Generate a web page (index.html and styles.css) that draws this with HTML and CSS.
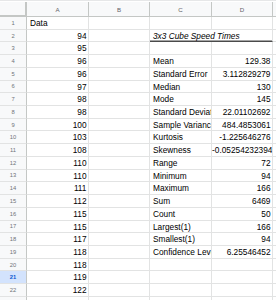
FILE: index.html
```html
<!DOCTYPE html>
<html>
<head>
<meta charset="utf-8">
<link rel="stylesheet" href="styles.css">
</head>
<body>
<div class="sheet">
  <div class="row head">
    <div class="corner"></div><div class="colh">A</div><div class="colh">B</div><div class="colh">C</div><div class="colh">D</div><div class="colh"></div>
  </div>
  <div class="row"><div class="rh">1</div><div class="c">Data</div><div class="c"></div><div class="c"></div><div class="c"></div><div class="c"></div></div>
  <div class="row"><div class="rh">2</div><div class="c n">94</div><div class="c"></div><div class="c title">3x3 Cube Speed Times</div><div class="c"></div></div>
  <div class="row"><div class="rh">3</div><div class="c n">95</div><div class="c"></div><div class="c"></div><div class="c"></div><div class="c"></div></div>
  <div class="row"><div class="rh">4</div><div class="c n">96</div><div class="c"></div><div class="c">Mean</div><div class="c n">129.38</div><div class="c"></div></div>
  <div class="row"><div class="rh">5</div><div class="c n">96</div><div class="c"></div><div class="c">Standard Error</div><div class="c n">3.112829279</div><div class="c"></div></div>
  <div class="row"><div class="rh">6</div><div class="c n">97</div><div class="c"></div><div class="c">Median</div><div class="c n">130</div><div class="c"></div></div>
  <div class="row"><div class="rh">7</div><div class="c n">98</div><div class="c"></div><div class="c">Mode</div><div class="c n">145</div><div class="c"></div></div>
  <div class="row"><div class="rh">8</div><div class="c n">98</div><div class="c"></div><div class="c">Standard Deviation</div><div class="c n">22.01102692</div><div class="c"></div></div>
  <div class="row"><div class="rh">9</div><div class="c n">100</div><div class="c"></div><div class="c">Sample Variance</div><div class="c n">484.4853061</div><div class="c"></div></div>
  <div class="row"><div class="rh">10</div><div class="c n">103</div><div class="c"></div><div class="c">Kurtosis</div><div class="c n">-1.225646276</div><div class="c"></div></div>
  <div class="row"><div class="rh">11</div><div class="c n">108</div><div class="c"></div><div class="c">Skewness</div><div class="c n">-0.05254232394</div><div class="c"></div></div>
  <div class="row"><div class="rh">12</div><div class="c n">110</div><div class="c"></div><div class="c">Range</div><div class="c n">72</div><div class="c"></div></div>
  <div class="row"><div class="rh">13</div><div class="c n">110</div><div class="c"></div><div class="c">Minimum</div><div class="c n">94</div><div class="c"></div></div>
  <div class="row"><div class="rh">14</div><div class="c n">111</div><div class="c"></div><div class="c">Maximum</div><div class="c n">166</div><div class="c"></div></div>
  <div class="row"><div class="rh">15</div><div class="c n">112</div><div class="c"></div><div class="c">Sum</div><div class="c n">6469</div><div class="c"></div></div>
  <div class="row"><div class="rh">16</div><div class="c n">115</div><div class="c"></div><div class="c">Count</div><div class="c n">50</div><div class="c"></div></div>
  <div class="row"><div class="rh">17</div><div class="c n">115</div><div class="c"></div><div class="c">Largest(1)</div><div class="c n">166</div><div class="c"></div></div>
  <div class="row"><div class="rh">18</div><div class="c n">117</div><div class="c"></div><div class="c">Smallest(1)</div><div class="c n">94</div><div class="c"></div></div>
  <div class="row"><div class="rh">19</div><div class="c n">118</div><div class="c"></div><div class="c">Confidence Level(95.0%)</div><div class="c n">6.25546452</div><div class="c"></div></div>
  <div class="row"><div class="rh">20</div><div class="c n">118</div><div class="c"></div><div class="c"></div><div class="c"></div><div class="c"></div></div>
  <div class="row"><div class="rh sel">21</div><div class="c n">119</div><div class="c"></div><div class="c"></div><div class="c"></div><div class="c"></div></div>
  <div class="row"><div class="rh">22</div><div class="c n">122</div><div class="c"></div><div class="c"></div><div class="c"></div><div class="c"></div></div>
  <div class="row"><div class="rh">23</div><div class="c"></div><div class="c"></div><div class="c"></div><div class="c"></div><div class="c"></div></div>
</div>
</body>
</html>
```
FILE: styles.css
```css
html, body {
  margin: 0;
  padding: 0;
  background: #ffffff;
  overflow: hidden;
}
.sheet {
  width: 276px;
  height: 300px;
  overflow: hidden;
  font-family: "Liberation Sans", Arial, sans-serif;
  color: #000;
  padding-top: 1px;
  box-sizing: border-box;
  border-top: 1px solid #e6e7e8;
}
.row {
  display: grid;
  grid-template-columns: 27px 62px 61px 62px 61px 40px;
  height: 12.73px;
}
.row.head {
  height: 15px;
}
.corner {
  background: #f8f9fa;
  border-right: 2px solid #c4c7c5;
  border-bottom: 2px solid #c4c7c5;
  box-sizing: border-box;
}
.colh {
  background: #f8f9fa;
  border-right: 1px solid #c4c7c5;
  border-bottom: 1px solid #c4c7c5;
  box-sizing: border-box;
  font-size: 6.2px;
  color: #5f6368;
  display: flex;
  align-items: center;
  justify-content: center;
}
.rh {
  background: #f8f9fa;
  border-right: 1px solid #c4c7c5;
  border-bottom: 1px solid #e2e3e3;
  box-sizing: border-box;
  font-size: 5.8px;
  color: #6f7378;
  display: flex;
  align-items: center;
  justify-content: center;
}
.rh.sel {
  background: #d3e3fd;
  color: #0b57d0;
  font-weight: bold;
}
.c {
  border-right: 1px solid #e2e3e3;
  border-bottom: 1px solid #e2e3e3;
  box-sizing: border-box;
  font-size: 8.3px;
  line-height: 12px;
  padding: 0 2px 0 3px;
  white-space: nowrap;
  overflow: hidden;
}
.c.n {
  text-align: right;
  padding-left: 0;
  padding-right: 1.5px;
}
.c.title {
  grid-column: span 2;
  font-style: italic;
  border-bottom: 1px solid #4a4a4a;
  box-shadow: inset 0 -0.5px 0 #4a4a4a;
}
```
